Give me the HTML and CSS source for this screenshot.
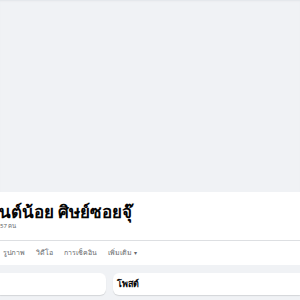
FILE: index.html
```html
<!DOCTYPE html>
<html lang="th">
<head>
<meta charset="utf-8">
<link rel="stylesheet" href="styles.css">
</head>
<body>
<div class="cover"></div>
<div class="profile">
  <h1 class="name">นต์น้อย ศิษย์ซอยจุ๊</h1>
  <div class="friends">57 คน</div>
  <nav class="tabs">
    <span class="tab">รูปภาพ</span>
    <span class="tab">วิดีโอ</span>
    <span class="tab">การเช็คอิน</span>
    <span class="tab">เพิ่มเติม <span class="caret">▾</span></span>
  </nav>
</div>
<div class="content">
  <div class="card left"></div>
  <div class="card right"><span class="card-title">โพสต์</span></div>
</div>
</body>
</html>
```
FILE: styles.css
```css
html, body {
  margin: 0;
  padding: 0;
  background: #f0f2f5;
  font-family: "Noto Sans", "Noto Sans CJK SC", sans-serif;
  width: 300px;
  height: 300px;
  overflow: hidden;
}
.cover {
  height: 192px;
  background: #f0f2f5;
  box-shadow: inset 0 2px 2px -1px #e2e4e8;
}
.profile {
  background: #fff;
  height: 73px;
  display: flex;
  flex-direction: column;
}
.name {
  margin: 0;
  padding: 10px 0 0 0;
  margin-left: -1px;
  font-size: 17px;
  line-height: 19px;
  font-weight: 700;
  color: #050505;
  white-space: nowrap;
}
.friends {
  font-size: 6px;
  line-height: 9px;
  margin-top: 1px;
  color: #65676b;
}
.tabs {
  margin-top: 9px;
  border-top: 1px solid #dddfe2;
  height: 23px;
  display: flex;
  align-items: center;
  gap: 11px;
  padding-left: 3px;
}
.tab {
  font-size: 7px;
  color: #65676b;
  font-weight: 500;
  white-space: nowrap;
}
.caret {
  font-size: 6px;
}
.content {
  display: flex;
  gap: 7px;
  padding-top: 8px;
}
.card {
  background: #fff;
  height: 22px;
  border-radius: 0 6px 6px 0;
  box-shadow: 0 1px 1px rgba(0,0,0,0.12);
}
.card.left {
  width: 106px;
}
.card.right {
  flex: 1;
  border-radius: 6px 0 0 6px;
  display: flex;
  align-items: center;
  padding-left: 4px;
}
.card-title {
  font-size: 9px;
  font-weight: 700;
  color: #050505;
}
```
